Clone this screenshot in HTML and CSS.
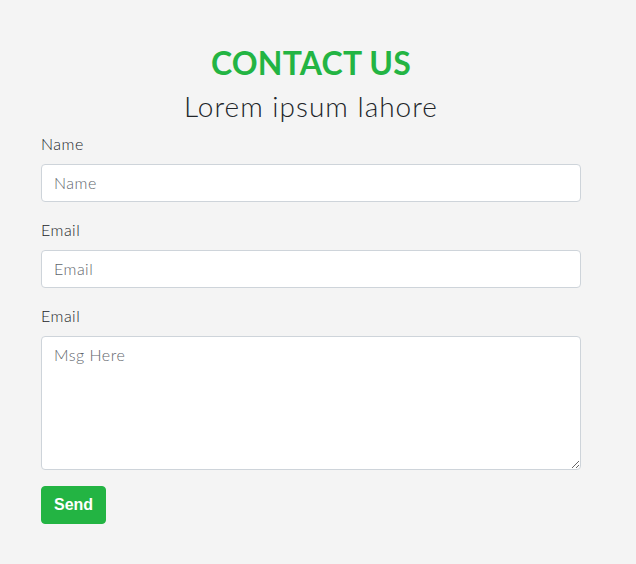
FILE: index.html
```html
<!DOCTYPE html>
<html>
<head>
<meta charset="utf-8">
<link rel="stylesheet" href="styles.css">
</head>
<body>
<div class="wrap">
  <h2 class="title">CONTACT US</h2>
  <h3 class="subtitle">Lorem ipsum lahore</h3>
  <form class="form">
    <div class="group">
      <label class="label">Name</label>
      <input class="control" type="text" placeholder="Name">
    </div>
    <div class="group">
      <label class="label">Email</label>
      <input class="control" type="text" placeholder="Email">
    </div>
    <div class="group">
      <label class="label">Email</label>
      <textarea class="control area" placeholder="Msg Here"></textarea>
    </div>
    <button class="btn" type="button">Send</button>
  </form>
</div>
</body>
</html>
```
FILE: styles.css
```css
html, body {
  margin: 0;
  padding: 0;
  background: #f4f4f4;
}
body {
  font-family: Lato, "Open Sans", sans-serif;
  color: #212529;
  font-size: 16px;
  line-height: 1.5;
}
.wrap {
  width: 540px;
  margin-left: 41px;
  padding-top: 44px;
}
.title {
  margin: 0 0 8px;
  font-size: 32px;
  line-height: 1.2;
  font-weight: 700;
  color: #23b443;
  text-align: center;
  letter-spacing: 0.2px;
}
.subtitle {
  margin: 0 0 8px;
  font-size: 28px;
  line-height: 1.2;
  font-weight: 300;
  color: #212529;
  text-align: center;
  letter-spacing: 1px;
}
.form {
  display: flex;
  flex-direction: column;
  align-items: flex-start;
}
.group {
  width: 100%;
  margin-bottom: 16px;
  display: flex;
  flex-direction: column;
}
.label {
  margin-bottom: 8px;
  color: #212529;
  font-weight: 300;
  letter-spacing: 0.5px;
}
.control {
  box-sizing: border-box;
  width: 100%;
  height: 38px;
  padding: 6px 12px;
  font-family: inherit;
  font-size: 16px;
  font-weight: 300;
  line-height: 1.5;
  color: #495057;
  background: #fff;
  border: 1px solid #ced4da;
  border-radius: 4px;
  margin: 0;
  letter-spacing: 0.5px;
}
.control::placeholder {
  color: #5f666c;
  opacity: 1;
}
.area {
  height: 134px;
  resize: vertical;
  display: block;
}
.btn {
  font-family: "Liberation Sans", Arial, sans-serif;
  font-weight: 700;
  font-size: 16px;
  line-height: 1.5;
  color: #fff;
  background: #23b443;
  border: 1px solid #23b443;
  border-radius: 4px;
  padding: 6px 12px;
  height: 38px;
}
```
